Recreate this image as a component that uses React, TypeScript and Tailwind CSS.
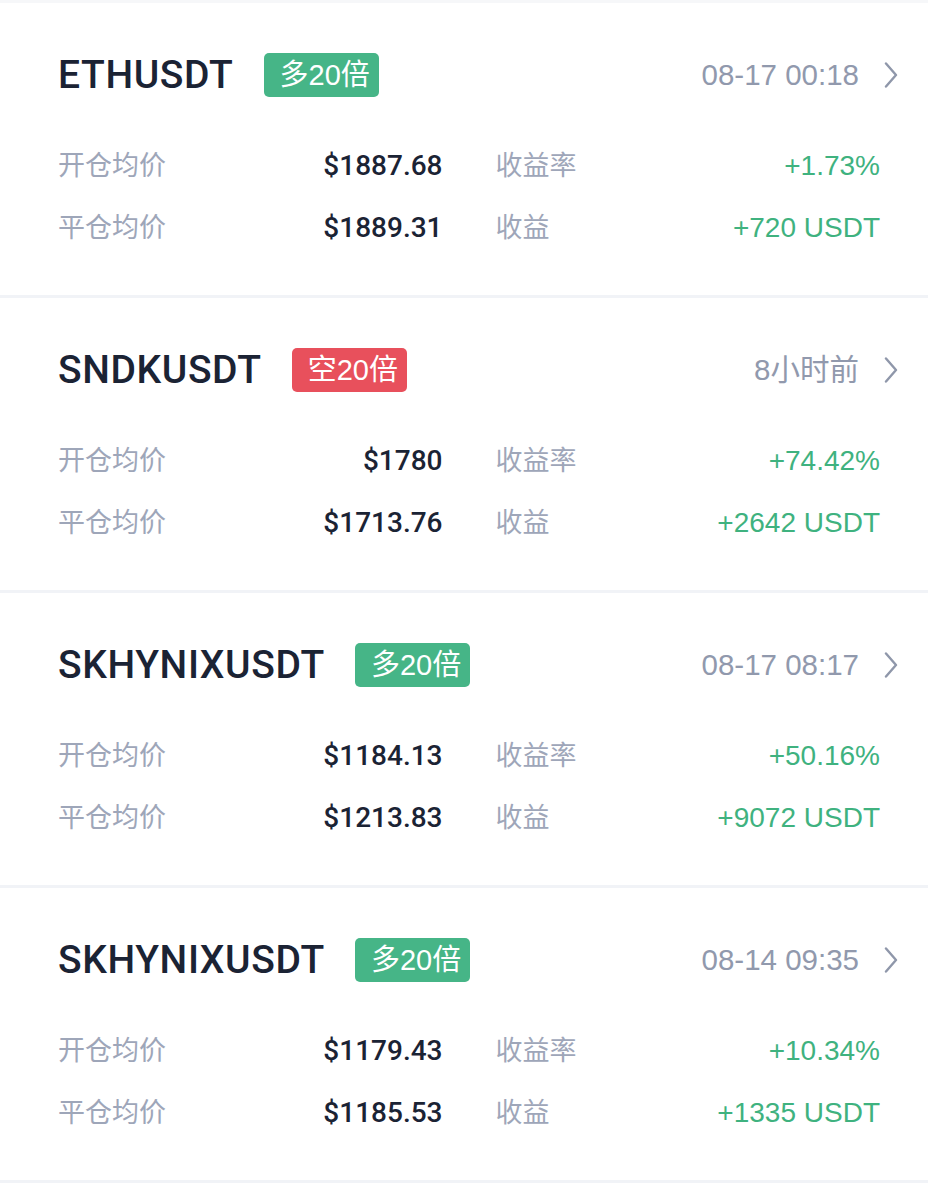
import React from "react";

type Item = {
  symbol: string;
  side: "long" | "short";
  time: string;
  open: string;
  close: string;
  rate: string;
  profit: string;
};

const items: Item[] = [
  { symbol: "ETHUSDT", side: "long", time: "08-17 00:18", open: "$1887.68", close: "$1889.31", rate: "+1.73%", profit: "+720 USDT" },
  { symbol: "SNDKUSDT", side: "short", time: "8小时前", open: "$1780", close: "$1713.76", rate: "+74.42%", profit: "+2642 USDT" },
  { symbol: "SKHYNIXUSDT", side: "long", time: "08-17 08:17", open: "$1184.13", close: "$1213.83", rate: "+50.16%", profit: "+9072 USDT" },
  { symbol: "SKHYNIXUSDT", side: "long", time: "08-14 09:35", open: "$1179.43", close: "$1185.53", rate: "+10.34%", profit: "+1335 USDT" },
];

const font = { fontFamily: '"Liberation Sans", "Noto Sans CJK SC", sans-serif' };
const medium = { fontFamily: 'Roboto, "Liberation Sans", "Noto Sans CJK SC", sans-serif' };

function Chevron() {
  return (
    <svg width="14" height="26" viewBox="0 0 14 26" fill="none">
      <path d="M2 1.5 L12 13 L2 24.5" stroke="#8f97aa" strokeWidth="2.4" strokeLinecap="round" strokeLinejoin="round" />
    </svg>
  );
}

function Card({ it }: { it: Item }) {
  return (
    <div className="bg-white border-b-[3px] border-[#f1f3f7] pt-[50px] pb-[47px]">
      <div className="flex items-center h-[44px] pl-[58px] pr-[30px]">
        <div className="text-[39px] font-medium text-[#1b2334] leading-none tracking-[0.6px]" style={medium}>
          {it.symbol}
        </div>
        <div
          className={
            "ml-[30px] h-[44px] rounded-[5px] flex items-center pl-[16px] pr-[9px] text-white text-[29px] leading-none " +
            (it.side === "long" ? "bg-[#46b587]" : "bg-[#e8505c]")
          }
        >
          {it.side === "long" ? "多" : "空"}20倍
        </div>
        <div className="flex-1" />
        <div className="text-[29.5px] text-[#9199ad] leading-none">{it.time}</div>
        <div className="ml-[25px] flex items-center">
          <Chevron />
        </div>
      </div>
      <div className="mt-[49px] pl-[58px] pr-[48px] grid grid-cols-2 gap-x-[53px] gap-y-[22px]">
        <div className="flex items-center justify-between h-[40px]">
          <span className="text-[27px] text-[#9ea6b9]">开仓均价</span>
          <span className="text-[28px] font-medium text-[#1b2334]" style={medium}>{it.open}</span>
        </div>
        <div className="flex items-center justify-between h-[40px]">
          <span className="text-[27px] text-[#9ea6b9]">收益率</span>
          <span className="text-[28px] text-[#3fb27f]">{it.rate}</span>
        </div>
        <div className="flex items-center justify-between h-[40px]">
          <span className="text-[27px] text-[#9ea6b9]">平仓均价</span>
          <span className="text-[28px] font-medium text-[#1b2334]" style={medium}>{it.close}</span>
        </div>
        <div className="flex items-center justify-between h-[40px]">
          <span className="text-[27px] text-[#9ea6b9]">收益</span>
          <span className="text-[28px] text-[#3fb27f]">{it.profit}</span>
        </div>
      </div>
    </div>
  );
}

export default function App() {
  return (
    <div className="w-[928px] min-h-[1200px] bg-white border-t-[3px] border-[#f6f7f9]" style={font}>
      {items.map((it, i) => (
        <Card key={i} it={it} />
      ))}
    </div>
  );
}
